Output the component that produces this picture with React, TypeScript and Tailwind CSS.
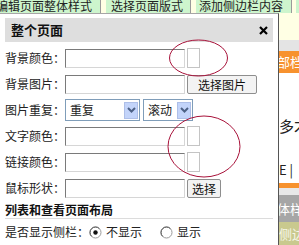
import React, { FC, ReactNode } from "react";

const Tab: FC<{ className: string; children: ReactNode }> = ({ className, children }) => (
  <div
    className={`h-[20px] shrink-0 bg-[#cdf5cd] border-r border-[#9a9a9a] leading-[26px] whitespace-nowrap ${className}`}
  >
    {children}
  </div>
);

const Row: FC<{ label: string; children: ReactNode }> = ({ label, children }) => (
  <div className="flex items-center h-[26px]">
    <span className="w-[60px] shrink-0 whitespace-nowrap">{label}</span>
    {children}
  </div>
);

const TextBox: FC = () => (
  <div className="w-[120px] h-[19px] shrink-0 bg-white border border-t-[#7a7a7a] border-l-[#7a7a7a] border-r-[#d6d6d6] border-b-[#d6d6d6]" />
);

const Swatch: FC = () => (
  <div className="ml-[2px] w-[13px] h-[20px] bg-white border border-[#c4c4c4]" />
);

const Button: FC<{ className: string; children: ReactNode }> = ({ className, children }) => (
  <button
    className={`ml-[2px] h-[19px] shrink-0 bg-[#f3f3f3] border border-[#8e8e8e] rounded-[2px] leading-[17px] text-[#111] ${className}`}
  >
    {children}
  </button>
);

const Select: FC<{ className: string; value: string }> = ({ className, value }) => (
  <div className={`flex items-center h-[22px] shrink-0 bg-white border border-[#7f9db9] ${className}`}>
    <span className="flex-1 pl-[4px] whitespace-nowrap overflow-hidden">{value}</span>
    <span className="flex items-center justify-center w-[14px] h-[17px] mr-[1px] bg-[#c3d4fa] border border-[#aebfe8]">
      <svg width="9" height="6" viewBox="0 0 9 6">
        <polyline points="1,1 4.5,4.5 8,1" fill="none" stroke="#4d6185" strokeWidth="2" />
      </svg>
    </span>
  </div>
);

const Radio: FC<{ checked?: boolean }> = ({ checked }) => (
  <svg width="13" height="13" viewBox="0 0 13 13" className="shrink-0">
    <circle cx="6.5" cy="6.5" r="5.5" fill="#fff" stroke="#9a9a9a" />
    <path d="M2.6 10.4 A5.5 5.5 0 0 1 10.4 2.6" fill="none" stroke="#555" />
    {checked && <circle cx="6.5" cy="6.5" r="2.2" fill="#111" />}
  </svg>
);

export default function App() {
  return (
    <div className="relative w-[299px] h-[245px] overflow-hidden bg-[#ffffe4] text-[12px] leading-[14px] text-[#222] font-['Noto_Sans_CJK_SC','Liberation_Sans',sans-serif]">
      {/* page tabs, cut off at the top */}
      <div className="flex items-end h-[13px] overflow-hidden">
        <Tab className="ml-[-9px] w-[110px] pl-[5px]">编辑页面整体样式</Tab>
        <Tab className="ml-[5px] w-[85px] pl-[5px]">选择页面版式</Tab>
        <Tab className="ml-[5px] w-[96px] pl-[3px]">添加侧边栏内容</Tab>
        <Tab className="ml-[4px] w-[40px] pl-[3px]">编辑</Tab>
      </div>

      <div className="flex h-[232px]">
        {/* dialog */}
        <div className="w-[279px] shrink-0 bg-white border-t border-t-[#a6a6a6] border-r border-r-[#555] px-[5px]">
          <div className="flex items-center justify-between mt-[4px] h-[24px] bg-[#dedede] pl-[6px] pr-[5px]">
            <span className="text-[13px] font-bold text-[#111]">整个页面</span>
            <svg width="9" height="9" viewBox="0 0 9 9">
              <path d="M1 1 L8 8 M8 1 L1 8" stroke="#000" strokeWidth="2.2" />
            </svg>
          </div>

          <div className="mt-[3px]">
            <Row label="背景颜色：">
              <TextBox />
              <Swatch />
            </Row>
            <Row label="背景图片：">
              <TextBox />
              <Button className="w-[70px]">选择图片</Button>
            </Row>
            <Row label="图片重复：">
              <Select className="w-[75px]" value="重复" />
              <Select className="ml-[3px] w-[50px]" value="滚动" />
            </Row>
            <Row label="文字颜色：">
              <TextBox />
              <Swatch />
            </Row>
            <Row label="链接颜色：">
              <TextBox />
              <Swatch />
            </Row>
            <Row label="鼠标形状：">
              <TextBox />
              <Button className="w-[34px]">选择</Button>
            </Row>
          </div>

          <div className="flex items-center h-[18px] border-b border-[#dcdcdc] font-bold text-[#111]">
            列表和查看页面布局
          </div>

          <div className="flex items-center h-[26px]">
            <span className="whitespace-nowrap">是否显示侧栏：</span>
            <Radio checked />
            <span className="ml-[4px]">不显示</span>
            <span className="ml-[18px]">
              <Radio />
            </span>
            <span className="ml-[4px]">显示</span>
          </div>
        </div>

        {/* page behind the dialog */}
        <div className="flex-1 flex flex-col overflow-hidden text-[13px] whitespace-nowrap">
          <div className="h-[27px]" />
          <div className="h-[11px] bg-[#e4e4e4]" />
          <div className="h-[22px] bg-[#f7922e] text-white leading-[22px] ml-[-15px]">全部档</div>
          <div className="h-[110px] bg-white text-[#222] text-[15px]">
            <div className="mt-[44px] leading-[18px]">多才</div>
            <div className="mt-[26px] leading-[18px] text-[13px]">E |</div>
          </div>
          <div className="h-[5px] bg-[#f7922e]" />
          <div className="h-[7px] bg-[#e8e8e8]" />
          <div className="h-[27px] bg-[#a6a6a6] text-white leading-[27px] ml-[-2px]">体样</div>
          <div className="flex-1 bg-[#c9c98e] text-[#f6f6e8] leading-[23px]">侧边</div>
        </div>
      </div>

      {/* red annotation rings */}
      <svg className="absolute left-0 top-0 pointer-events-none" width="299" height="245" viewBox="0 0 299 245">
        <ellipse cx="198.5" cy="58" rx="29" ry="18" fill="none" stroke="#a8123a" strokeWidth="1" />
        <ellipse cx="204" cy="146.5" rx="36" ry="30.5" fill="none" stroke="#a8123a" strokeWidth="1" />
      </svg>
    </div>
  );
}
